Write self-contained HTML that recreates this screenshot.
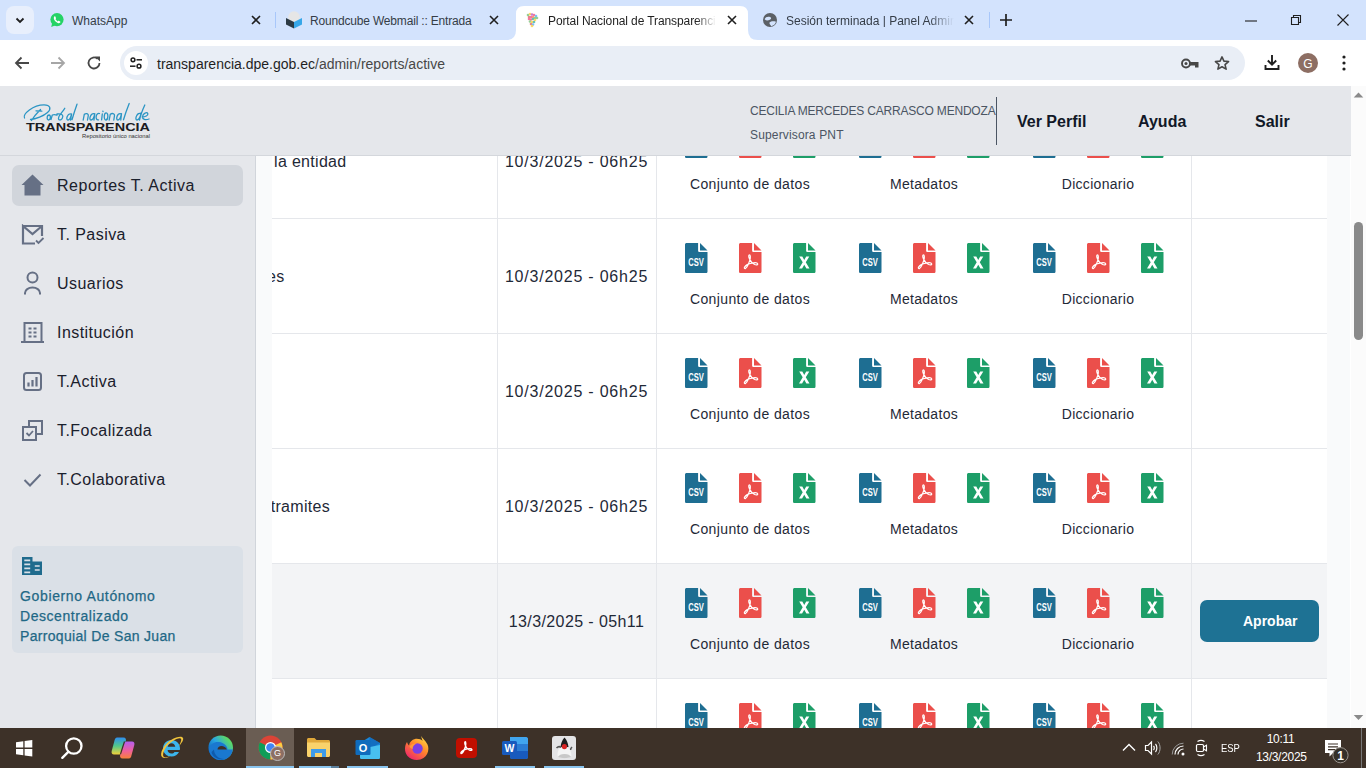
<!DOCTYPE html>
<html><head><meta charset="utf-8">
<style>
*{box-sizing:border-box;margin:0;padding:0}
html,body{width:1366px;height:768px;overflow:hidden;background:#fff;font-family:"Liberation Sans",sans-serif;position:relative}
.a{position:absolute}
.t{position:absolute;white-space:nowrap}
</style></head><body>
<div class="a" style="left:0px;top:0px;width:1366px;height:40px;background:#d3e3fd;"></div>
<div class="a" style="left:6px;top:6px;width:28px;height:28px;background:#e8effc;border-radius:8px"></div>
<svg class="a" style="left:13px;top:13px;" width="14" height="14" viewBox="0 0 14 14"><path d="M3.5 5.5 L7 9 L10.5 5.5" fill="none" stroke="#1f1f1f" stroke-width="1.8"/></svg>
<svg class="a" style="left:49px;top:12px;" width="16" height="16" viewBox="0 0 16 16"><circle cx="8" cy="7.6" r="6.6" fill="#25d366"/><path d="M2.2 15 L3.2 11 L6 13.5 Z" fill="#25d366"/><path d="M5.3 4.6c.4-.4.9-.4 1.1.1l.6 1.3c.1.3 0 .5-.2.7l-.4.4c.5 1 1.3 1.8 2.3 2.3l.4-.4c.2-.2.5-.3.7-.2l1.3.6c.4.2.5.7.1 1.1-.6.7-1.5.9-2.4.5-1.7-.8-3-2.1-3.8-3.8-.4-.9-.3-1.8.3-2.6z" fill="#fff"/></svg>
<div class="t" style="left:72px;top:14.84px;font-size:12px;line-height:12px;color:#353d47;font-weight:400;letter-spacing:0px;">WhatsApp</div>
<svg class="a" style="left:249px;top:13px;" width="14" height="14" viewBox="0 0 14 14"><path d="M3 3 L11 11 M11 3 L3 11" stroke="#1f1f1f" stroke-width="1.6"/></svg>
<div class="a" style="left:275px;top:12px;width:1px;height:16px;background:#a8c7fa;"></div>
<svg class="a" style="left:285px;top:9px;" width="18" height="21" viewBox="0 0 18 21"><circle cx="9" cy="8" r="5.8" fill="#e6e6e6"/><path d="M1 9 L9 13 V19.5 L1 15.5 Z" fill="#2c3a44"/><path d="M17 9 L9 13 V19.5 L17 15.5 Z" fill="#37a7e8"/></svg>
<div class="t" style="left:310px;top:14.84px;font-size:12px;line-height:12px;color:#353d47;font-weight:400;letter-spacing:-0.18px;">Roundcube Webmail :: Entrada</div>
<svg class="a" style="left:487px;top:13px;" width="14" height="14" viewBox="0 0 14 14"><path d="M3 3 L11 11 M11 3 L3 11" stroke="#1f1f1f" stroke-width="1.6"/></svg>
<svg class="a" style="left:506px;top:6px" width="252" height="34" viewBox="0 0 252 34"><path d="M0 34 Q10 34 10 24 L10 8 Q10 0 18 0 L234 0 Q242 0 242 8 L242 24 Q242 34 252 34 Z" fill="#fff"/></svg>
<svg class="a" style="left:526px;top:12px;" width="13" height="16" viewBox="0 0 13 16"><circle cx="2" cy="3" r="1.3" fill="#81c784" opacity=".85"/><circle cx="4" cy="2" r="1.3" fill="#ffd54f" opacity=".85"/><circle cx="6" cy="2.5" r="1.3" fill="#ba68c8" opacity=".85"/><circle cx="8" cy="3" r="1.3" fill="#f06292" opacity=".85"/><circle cx="10" cy="4" r="1.3" fill="#64b5f6" opacity=".85"/><circle cx="3" cy="5" r="1.3" fill="#e57373" opacity=".85"/><circle cx="5" cy="5" r="1.3" fill="#f06292" opacity=".85"/><circle cx="7" cy="5" r="1.3" fill="#ff8a65" opacity=".85"/><circle cx="9" cy="6" r="1.3" fill="#81c784" opacity=".85"/><circle cx="11" cy="6" r="1.3" fill="#81c784" opacity=".85"/><circle cx="3" cy="7" r="1.3" fill="#f06292" opacity=".85"/><circle cx="5" cy="7.5" r="1.3" fill="#f06292" opacity=".85"/><circle cx="7" cy="7" r="1.3" fill="#4db6ac" opacity=".85"/><circle cx="9" cy="8" r="1.3" fill="#ffd54f" opacity=".85"/><circle cx="4" cy="9.5" r="1.3" fill="#81c784" opacity=".85"/><circle cx="6" cy="10" r="1.3" fill="#ffd54f" opacity=".85"/><circle cx="8" cy="10" r="1.3" fill="#4db6ac" opacity=".85"/><circle cx="5" cy="12" r="1.3" fill="#e57373" opacity=".85"/><circle cx="7" cy="12.5" r="1.3" fill="#64b5f6" opacity=".85"/><circle cx="6" cy="14" r="1.3" fill="#ffd54f" opacity=".85"/></svg>
<div class="t" style="left:548px;top:14.84px;font-size:12px;line-height:12px;color:#1f1f1f;font-weight:400;letter-spacing:-0.1px;width:168px;overflow:hidden;-webkit-mask-image:linear-gradient(90deg,#000 88%,transparent)">Portal Nacional de Transparenci</div>
<svg class="a" style="left:725px;top:13px;" width="14" height="14" viewBox="0 0 14 14"><path d="M3 3 L11 11 M11 3 L3 11" stroke="#1f1f1f" stroke-width="1.6"/></svg>
<svg class="a" style="left:763px;top:13px;" width="14" height="14" viewBox="0 0 14 14"><circle cx="7" cy="7" r="7" fill="#5b6066"/><path d="M1.6 6.2 C2.5 3.8 5 3.2 7.5 4.2 C8.6 4.7 8.2 6.2 6.8 6.8 C5 7.6 3.2 7.8 1.6 6.2Z" fill="#d3e3fd"/><path d="M6.5 9.5 C8 8.2 10.5 8 13 8.8 C12.5 11 10.5 12.8 8.2 13.2 C7.8 12 6 11 6.5 9.5Z" fill="#d3e3fd"/></svg>
<div class="t" style="left:786px;top:14.84px;font-size:12px;line-height:12px;color:#353d47;font-weight:400;letter-spacing:0px;width:168px;overflow:hidden;-webkit-mask-image:linear-gradient(90deg,#000 85%,transparent)">Sesión terminada | Panel Admin</div>
<svg class="a" style="left:962px;top:13px;" width="14" height="14" viewBox="0 0 14 14"><path d="M3 3 L11 11 M11 3 L3 11" stroke="#1f1f1f" stroke-width="1.6"/></svg>
<div class="a" style="left:989px;top:12px;width:1px;height:16px;background:#a8c7fa;"></div>
<svg class="a" style="left:998px;top:12px;" width="16" height="16" viewBox="0 0 16 16"><path d="M8 2 V14 M2 8 H14" stroke="#1f1f1f" stroke-width="1.7"/></svg>
<svg class="a" style="left:1243px;top:13px;" width="16" height="16" viewBox="0 0 16 16"><path d="M2 8 H14" stroke="#1f1f1f" stroke-width="1.1"/></svg>
<svg class="a" style="left:1288px;top:12px;" width="16" height="16" viewBox="0 0 16 16"><path d="M3.5 5.5 H10.5 V12.5 H3.5 Z M5.5 5.5 V3.5 H12.5 V10.5 H10.5" fill="none" stroke="#1f1f1f" stroke-width="1.1"/></svg>
<svg class="a" style="left:1335px;top:12px;" width="16" height="16" viewBox="0 0 16 16"><path d="M2.5 2.5 L13.5 13.5 M13.5 2.5 L2.5 13.5" stroke="#1f1f1f" stroke-width="1.1"/></svg>
<div class="a" style="left:0px;top:40px;width:1366px;height:46px;background:#fff;border-radius:8px 8px 0 0"></div>
<svg class="a" style="left:13px;top:54px;" width="18" height="18" viewBox="0 0 18 18"><path d="M16 9 H3 M8.5 3.5 L3 9 L8.5 14.5" fill="none" stroke="#474747" stroke-width="1.8"/></svg>
<svg class="a" style="left:49px;top:54px;" width="18" height="18" viewBox="0 0 18 18"><path d="M2 9 H15 M9.5 3.5 L15 9 L9.5 14.5" fill="none" stroke="#a6a6a6" stroke-width="1.8"/></svg>
<svg class="a" style="left:85px;top:54px;" width="18" height="18" viewBox="0 0 18 18"><path d="M14.5 9 A5.5 5.5 0 1 1 12.6 4.8" fill="none" stroke="#474747" stroke-width="1.8"/><path d="M10 2.5 H15 V7.5 Z" fill="#474747"/></svg>
<div class="a" style="left:120px;top:46px;width:1125px;height:34px;background:#e9eef6;border-radius:17px"></div>
<div class="a" style="left:124px;top:51px;width:24px;height:24px;background:#fff;border-radius:12px"></div>
<svg class="a" style="left:128px;top:55px;" width="16" height="16" viewBox="0 0 16 16"><circle cx="5" cy="4.8" r="1.9" fill="none" stroke="#1f1f1f" stroke-width="1.5"/><path d="M8.5 4.8 H14" stroke="#1f1f1f" stroke-width="1.5"/><circle cx="11" cy="11.2" r="1.9" fill="none" stroke="#1f1f1f" stroke-width="1.5"/><path d="M2 11.2 H7.5" stroke="#1f1f1f" stroke-width="1.5"/></svg>
<div class="t" style="left:157px;top:57.05px;font-size:14px;line-height:14px;color:#1f1f1f;font-weight:400;letter-spacing:0px;">transparencia.dpe.gob.ec<span style="color:#474747">/admin/reports/active</span></div>
<svg class="a" style="left:1180px;top:55px;" width="20" height="16" viewBox="0 0 20 16"><circle cx="6" cy="8.5" r="4" fill="none" stroke="#474747" stroke-width="1.9"/><circle cx="6" cy="8.5" r="1.5" fill="#474747"/><path d="M9.5 7 H18.5 V12.5 H15 V10.5 H9.5 Z" fill="#474747"/></svg>
<svg class="a" style="left:1212px;top:53px;" width="20" height="20" viewBox="0 0 20 20"><path transform="translate(10 10) scale(0.84) translate(-10 -9.5)" d="M10 2.2 L12.3 7.3 L17.8 7.8 L13.6 11.4 L14.9 16.8 L10 13.9 L5.1 16.8 L6.4 11.4 L2.2 7.8 L7.7 7.3 Z" fill="none" stroke="#474747" stroke-width="1.9" stroke-linejoin="round"/></svg>
<svg class="a" style="left:1262px;top:52px;" width="20" height="20" viewBox="0 0 20 20"><path d="M10 3 V12.5 M5.8 8.5 L10 12.7 L14.2 8.5" fill="none" stroke="#1f1f1f" stroke-width="1.9"/><path d="M3.5 13 V17 H16.5 V13" fill="none" stroke="#1f1f1f" stroke-width="1.9"/></svg>
<div class="a" style="left:1298px;top:53px;width:20px;height:20px;background:#8d6e63;border-radius:10px"></div>
<div class="t" style="left:1298.0px;width:20px;text-align:center;top:57.84px;font-size:12px;line-height:12px;color:#fff;font-weight:400;letter-spacing:0px;">G</div>
<svg class="a" style="left:1337px;top:53px;" width="14" height="20" viewBox="0 0 14 20"><circle cx="7" cy="4" r="1.6" fill="#1f1f1f"/><circle cx="7" cy="10" r="1.6" fill="#1f1f1f"/><circle cx="7" cy="16" r="1.6" fill="#1f1f1f"/></svg>
<div class="a" style="left:0px;top:86px;width:1350px;height:642px;background:#fff;"></div>
<div class="a" style="left:256px;top:155px;width:16px;height:573px;background:#f9fafb;"></div>
<div class="a" style="left:1327px;top:155px;width:23px;height:573px;background:#f9fafb;"></div>
<div class="a" style="left:272px;top:103px;width:1055px;height:115px;background:#fff;"></div>
<div class="a" style="left:272px;top:103px;width:225px;height:115px;overflow:hidden"><div class="t" style="left:0px;top:51.06px;font-size:16px;line-height:16px;color:#1f2937;font-weight:400;letter-spacing:0.3px;left:auto;right:150.5px">la entidad</div>
</div><div class="t" style="left:476.5px;width:200px;text-align:center;top:154.06px;font-size:16px;line-height:16px;color:#1f2937;font-weight:400;letter-spacing:0.78px;">10/3/2025 - 06h25</div>
<svg class="a" style="left:685px;top:128px" width="22.5" height="30" viewBox="0 0 22.5 30"><path d="M0 1.6C0 .7 .7 0 1.6 0H13.1V7.5c0 .9.7 1.6 1.6 1.6H22.5V28.4c0 .9-.7 1.6-1.6 1.6H1.6c-.9 0-1.6-.7-1.6-1.6Z" fill="#1e6e92"/><path d="M22.5 7.5H15V0Z" fill="#1e6e92"/><text x="3.3" y="22.6" font-family="Liberation Sans" font-weight="700" font-size="10.4" fill="#fff" textLength="15.6" lengthAdjust="spacingAndGlyphs">CSV</text></svg>
<svg class="a" style="left:739px;top:128px" width="22.5" height="30" viewBox="0 0 22.5 30"><path d="M0 1.6C0 .7 .7 0 1.6 0H13.1V7.5c0 .9.7 1.6 1.6 1.6H22.5V28.4c0 .9-.7 1.6-1.6 1.6H1.6c-.9 0-1.6-.7-1.6-1.6Z" fill="#eb4f4b"/><path d="M22.5 7.5H15V0Z" fill="#eb4f4b"/><path transform="translate(11.25 19) scale(1.18) translate(-11.6 -18.3)" d="M11 12.2c-.9 0-.9 1.6 0 3.6 .8 1.8 2.3 3.7 4.3 4.6 1.5.6 2.8.3 2.6-.6-.2-.9-2.3-1.1-4.9-.6-2.7.5-5.3 1.9-6.2 3.4-.6 1 .1 1.6 1 .9 1.2-1 2.5-3.9 3.4-6.6.6-1.9.7-4.7-.2-4.7z" fill="none" stroke="#fff" stroke-width="1.05"/></svg>
<svg class="a" style="left:793px;top:128px" width="22.5" height="30" viewBox="0 0 22.5 30"><path d="M0 1.6C0 .7 .7 0 1.6 0H13.1V7.5c0 .9.7 1.6 1.6 1.6H22.5V28.4c0 .9-.7 1.6-1.6 1.6H1.6c-.9 0-1.6-.7-1.6-1.6Z" fill="#1d9e68"/><path d="M22.5 7.5H15V0Z" fill="#1d9e68"/><path d="M6.2 13.5H9.3L11.25 16.9L13.2 13.5H16.3L12.8 19.3L16.5 25.5H13.4L11.25 21.7L9.1 25.5H6L9.7 19.3Z" fill="#fff"/></svg>
<svg class="a" style="left:859px;top:128px" width="22.5" height="30" viewBox="0 0 22.5 30"><path d="M0 1.6C0 .7 .7 0 1.6 0H13.1V7.5c0 .9.7 1.6 1.6 1.6H22.5V28.4c0 .9-.7 1.6-1.6 1.6H1.6c-.9 0-1.6-.7-1.6-1.6Z" fill="#1e6e92"/><path d="M22.5 7.5H15V0Z" fill="#1e6e92"/><text x="3.3" y="22.6" font-family="Liberation Sans" font-weight="700" font-size="10.4" fill="#fff" textLength="15.6" lengthAdjust="spacingAndGlyphs">CSV</text></svg>
<svg class="a" style="left:913px;top:128px" width="22.5" height="30" viewBox="0 0 22.5 30"><path d="M0 1.6C0 .7 .7 0 1.6 0H13.1V7.5c0 .9.7 1.6 1.6 1.6H22.5V28.4c0 .9-.7 1.6-1.6 1.6H1.6c-.9 0-1.6-.7-1.6-1.6Z" fill="#eb4f4b"/><path d="M22.5 7.5H15V0Z" fill="#eb4f4b"/><path transform="translate(11.25 19) scale(1.18) translate(-11.6 -18.3)" d="M11 12.2c-.9 0-.9 1.6 0 3.6 .8 1.8 2.3 3.7 4.3 4.6 1.5.6 2.8.3 2.6-.6-.2-.9-2.3-1.1-4.9-.6-2.7.5-5.3 1.9-6.2 3.4-.6 1 .1 1.6 1 .9 1.2-1 2.5-3.9 3.4-6.6.6-1.9.7-4.7-.2-4.7z" fill="none" stroke="#fff" stroke-width="1.05"/></svg>
<svg class="a" style="left:967px;top:128px" width="22.5" height="30" viewBox="0 0 22.5 30"><path d="M0 1.6C0 .7 .7 0 1.6 0H13.1V7.5c0 .9.7 1.6 1.6 1.6H22.5V28.4c0 .9-.7 1.6-1.6 1.6H1.6c-.9 0-1.6-.7-1.6-1.6Z" fill="#1d9e68"/><path d="M22.5 7.5H15V0Z" fill="#1d9e68"/><path d="M6.2 13.5H9.3L11.25 16.9L13.2 13.5H16.3L12.8 19.3L16.5 25.5H13.4L11.25 21.7L9.1 25.5H6L9.7 19.3Z" fill="#fff"/></svg>
<svg class="a" style="left:1033px;top:128px" width="22.5" height="30" viewBox="0 0 22.5 30"><path d="M0 1.6C0 .7 .7 0 1.6 0H13.1V7.5c0 .9.7 1.6 1.6 1.6H22.5V28.4c0 .9-.7 1.6-1.6 1.6H1.6c-.9 0-1.6-.7-1.6-1.6Z" fill="#1e6e92"/><path d="M22.5 7.5H15V0Z" fill="#1e6e92"/><text x="3.3" y="22.6" font-family="Liberation Sans" font-weight="700" font-size="10.4" fill="#fff" textLength="15.6" lengthAdjust="spacingAndGlyphs">CSV</text></svg>
<svg class="a" style="left:1087px;top:128px" width="22.5" height="30" viewBox="0 0 22.5 30"><path d="M0 1.6C0 .7 .7 0 1.6 0H13.1V7.5c0 .9.7 1.6 1.6 1.6H22.5V28.4c0 .9-.7 1.6-1.6 1.6H1.6c-.9 0-1.6-.7-1.6-1.6Z" fill="#eb4f4b"/><path d="M22.5 7.5H15V0Z" fill="#eb4f4b"/><path transform="translate(11.25 19) scale(1.18) translate(-11.6 -18.3)" d="M11 12.2c-.9 0-.9 1.6 0 3.6 .8 1.8 2.3 3.7 4.3 4.6 1.5.6 2.8.3 2.6-.6-.2-.9-2.3-1.1-4.9-.6-2.7.5-5.3 1.9-6.2 3.4-.6 1 .1 1.6 1 .9 1.2-1 2.5-3.9 3.4-6.6.6-1.9.7-4.7-.2-4.7z" fill="none" stroke="#fff" stroke-width="1.05"/></svg>
<svg class="a" style="left:1141px;top:128px" width="22.5" height="30" viewBox="0 0 22.5 30"><path d="M0 1.6C0 .7 .7 0 1.6 0H13.1V7.5c0 .9.7 1.6 1.6 1.6H22.5V28.4c0 .9-.7 1.6-1.6 1.6H1.6c-.9 0-1.6-.7-1.6-1.6Z" fill="#1d9e68"/><path d="M22.5 7.5H15V0Z" fill="#1d9e68"/><path d="M6.2 13.5H9.3L11.25 16.9L13.2 13.5H16.3L12.8 19.3L16.5 25.5H13.4L11.25 21.7L9.1 25.5H6L9.7 19.3Z" fill="#fff"/></svg>
<div class="t" style="left:650.0px;width:200px;text-align:center;top:177.05px;font-size:14px;line-height:14px;color:#1f2937;font-weight:400;letter-spacing:0.38px;">Conjunto de datos</div>
<div class="t" style="left:824.0px;width:200px;text-align:center;top:177.05px;font-size:14px;line-height:14px;color:#1f2937;font-weight:400;letter-spacing:0.3px;">Metadatos</div>
<div class="t" style="left:998.0px;width:200px;text-align:center;top:177.05px;font-size:14px;line-height:14px;color:#1f2937;font-weight:400;letter-spacing:0.3px;">Diccionario</div>
<div class="a" style="left:272px;top:218px;width:1055px;height:115px;background:#fff;"></div>
<div class="a" style="left:272px;top:218px;width:225px;height:115px;overflow:hidden"><div class="t" style="left:0px;top:51.06px;font-size:16px;line-height:16px;color:#1f2937;font-weight:400;letter-spacing:0.3px;left:auto;right:212.5px">ones</div>
</div><div class="t" style="left:476.5px;width:200px;text-align:center;top:269.06px;font-size:16px;line-height:16px;color:#1f2937;font-weight:400;letter-spacing:0.78px;">10/3/2025 - 06h25</div>
<svg class="a" style="left:685px;top:243px" width="22.5" height="30" viewBox="0 0 22.5 30"><path d="M0 1.6C0 .7 .7 0 1.6 0H13.1V7.5c0 .9.7 1.6 1.6 1.6H22.5V28.4c0 .9-.7 1.6-1.6 1.6H1.6c-.9 0-1.6-.7-1.6-1.6Z" fill="#1e6e92"/><path d="M22.5 7.5H15V0Z" fill="#1e6e92"/><text x="3.3" y="22.6" font-family="Liberation Sans" font-weight="700" font-size="10.4" fill="#fff" textLength="15.6" lengthAdjust="spacingAndGlyphs">CSV</text></svg>
<svg class="a" style="left:739px;top:243px" width="22.5" height="30" viewBox="0 0 22.5 30"><path d="M0 1.6C0 .7 .7 0 1.6 0H13.1V7.5c0 .9.7 1.6 1.6 1.6H22.5V28.4c0 .9-.7 1.6-1.6 1.6H1.6c-.9 0-1.6-.7-1.6-1.6Z" fill="#eb4f4b"/><path d="M22.5 7.5H15V0Z" fill="#eb4f4b"/><path transform="translate(11.25 19) scale(1.18) translate(-11.6 -18.3)" d="M11 12.2c-.9 0-.9 1.6 0 3.6 .8 1.8 2.3 3.7 4.3 4.6 1.5.6 2.8.3 2.6-.6-.2-.9-2.3-1.1-4.9-.6-2.7.5-5.3 1.9-6.2 3.4-.6 1 .1 1.6 1 .9 1.2-1 2.5-3.9 3.4-6.6.6-1.9.7-4.7-.2-4.7z" fill="none" stroke="#fff" stroke-width="1.05"/></svg>
<svg class="a" style="left:793px;top:243px" width="22.5" height="30" viewBox="0 0 22.5 30"><path d="M0 1.6C0 .7 .7 0 1.6 0H13.1V7.5c0 .9.7 1.6 1.6 1.6H22.5V28.4c0 .9-.7 1.6-1.6 1.6H1.6c-.9 0-1.6-.7-1.6-1.6Z" fill="#1d9e68"/><path d="M22.5 7.5H15V0Z" fill="#1d9e68"/><path d="M6.2 13.5H9.3L11.25 16.9L13.2 13.5H16.3L12.8 19.3L16.5 25.5H13.4L11.25 21.7L9.1 25.5H6L9.7 19.3Z" fill="#fff"/></svg>
<svg class="a" style="left:859px;top:243px" width="22.5" height="30" viewBox="0 0 22.5 30"><path d="M0 1.6C0 .7 .7 0 1.6 0H13.1V7.5c0 .9.7 1.6 1.6 1.6H22.5V28.4c0 .9-.7 1.6-1.6 1.6H1.6c-.9 0-1.6-.7-1.6-1.6Z" fill="#1e6e92"/><path d="M22.5 7.5H15V0Z" fill="#1e6e92"/><text x="3.3" y="22.6" font-family="Liberation Sans" font-weight="700" font-size="10.4" fill="#fff" textLength="15.6" lengthAdjust="spacingAndGlyphs">CSV</text></svg>
<svg class="a" style="left:913px;top:243px" width="22.5" height="30" viewBox="0 0 22.5 30"><path d="M0 1.6C0 .7 .7 0 1.6 0H13.1V7.5c0 .9.7 1.6 1.6 1.6H22.5V28.4c0 .9-.7 1.6-1.6 1.6H1.6c-.9 0-1.6-.7-1.6-1.6Z" fill="#eb4f4b"/><path d="M22.5 7.5H15V0Z" fill="#eb4f4b"/><path transform="translate(11.25 19) scale(1.18) translate(-11.6 -18.3)" d="M11 12.2c-.9 0-.9 1.6 0 3.6 .8 1.8 2.3 3.7 4.3 4.6 1.5.6 2.8.3 2.6-.6-.2-.9-2.3-1.1-4.9-.6-2.7.5-5.3 1.9-6.2 3.4-.6 1 .1 1.6 1 .9 1.2-1 2.5-3.9 3.4-6.6.6-1.9.7-4.7-.2-4.7z" fill="none" stroke="#fff" stroke-width="1.05"/></svg>
<svg class="a" style="left:967px;top:243px" width="22.5" height="30" viewBox="0 0 22.5 30"><path d="M0 1.6C0 .7 .7 0 1.6 0H13.1V7.5c0 .9.7 1.6 1.6 1.6H22.5V28.4c0 .9-.7 1.6-1.6 1.6H1.6c-.9 0-1.6-.7-1.6-1.6Z" fill="#1d9e68"/><path d="M22.5 7.5H15V0Z" fill="#1d9e68"/><path d="M6.2 13.5H9.3L11.25 16.9L13.2 13.5H16.3L12.8 19.3L16.5 25.5H13.4L11.25 21.7L9.1 25.5H6L9.7 19.3Z" fill="#fff"/></svg>
<svg class="a" style="left:1033px;top:243px" width="22.5" height="30" viewBox="0 0 22.5 30"><path d="M0 1.6C0 .7 .7 0 1.6 0H13.1V7.5c0 .9.7 1.6 1.6 1.6H22.5V28.4c0 .9-.7 1.6-1.6 1.6H1.6c-.9 0-1.6-.7-1.6-1.6Z" fill="#1e6e92"/><path d="M22.5 7.5H15V0Z" fill="#1e6e92"/><text x="3.3" y="22.6" font-family="Liberation Sans" font-weight="700" font-size="10.4" fill="#fff" textLength="15.6" lengthAdjust="spacingAndGlyphs">CSV</text></svg>
<svg class="a" style="left:1087px;top:243px" width="22.5" height="30" viewBox="0 0 22.5 30"><path d="M0 1.6C0 .7 .7 0 1.6 0H13.1V7.5c0 .9.7 1.6 1.6 1.6H22.5V28.4c0 .9-.7 1.6-1.6 1.6H1.6c-.9 0-1.6-.7-1.6-1.6Z" fill="#eb4f4b"/><path d="M22.5 7.5H15V0Z" fill="#eb4f4b"/><path transform="translate(11.25 19) scale(1.18) translate(-11.6 -18.3)" d="M11 12.2c-.9 0-.9 1.6 0 3.6 .8 1.8 2.3 3.7 4.3 4.6 1.5.6 2.8.3 2.6-.6-.2-.9-2.3-1.1-4.9-.6-2.7.5-5.3 1.9-6.2 3.4-.6 1 .1 1.6 1 .9 1.2-1 2.5-3.9 3.4-6.6.6-1.9.7-4.7-.2-4.7z" fill="none" stroke="#fff" stroke-width="1.05"/></svg>
<svg class="a" style="left:1141px;top:243px" width="22.5" height="30" viewBox="0 0 22.5 30"><path d="M0 1.6C0 .7 .7 0 1.6 0H13.1V7.5c0 .9.7 1.6 1.6 1.6H22.5V28.4c0 .9-.7 1.6-1.6 1.6H1.6c-.9 0-1.6-.7-1.6-1.6Z" fill="#1d9e68"/><path d="M22.5 7.5H15V0Z" fill="#1d9e68"/><path d="M6.2 13.5H9.3L11.25 16.9L13.2 13.5H16.3L12.8 19.3L16.5 25.5H13.4L11.25 21.7L9.1 25.5H6L9.7 19.3Z" fill="#fff"/></svg>
<div class="t" style="left:650.0px;width:200px;text-align:center;top:292.05px;font-size:14px;line-height:14px;color:#1f2937;font-weight:400;letter-spacing:0.38px;">Conjunto de datos</div>
<div class="t" style="left:824.0px;width:200px;text-align:center;top:292.05px;font-size:14px;line-height:14px;color:#1f2937;font-weight:400;letter-spacing:0.3px;">Metadatos</div>
<div class="t" style="left:998.0px;width:200px;text-align:center;top:292.05px;font-size:14px;line-height:14px;color:#1f2937;font-weight:400;letter-spacing:0.3px;">Diccionario</div>
<div class="a" style="left:272px;top:333px;width:1055px;height:115px;background:#fff;"></div>
<div class="t" style="left:476.5px;width:200px;text-align:center;top:384.06px;font-size:16px;line-height:16px;color:#1f2937;font-weight:400;letter-spacing:0.78px;">10/3/2025 - 06h25</div>
<svg class="a" style="left:685px;top:358px" width="22.5" height="30" viewBox="0 0 22.5 30"><path d="M0 1.6C0 .7 .7 0 1.6 0H13.1V7.5c0 .9.7 1.6 1.6 1.6H22.5V28.4c0 .9-.7 1.6-1.6 1.6H1.6c-.9 0-1.6-.7-1.6-1.6Z" fill="#1e6e92"/><path d="M22.5 7.5H15V0Z" fill="#1e6e92"/><text x="3.3" y="22.6" font-family="Liberation Sans" font-weight="700" font-size="10.4" fill="#fff" textLength="15.6" lengthAdjust="spacingAndGlyphs">CSV</text></svg>
<svg class="a" style="left:739px;top:358px" width="22.5" height="30" viewBox="0 0 22.5 30"><path d="M0 1.6C0 .7 .7 0 1.6 0H13.1V7.5c0 .9.7 1.6 1.6 1.6H22.5V28.4c0 .9-.7 1.6-1.6 1.6H1.6c-.9 0-1.6-.7-1.6-1.6Z" fill="#eb4f4b"/><path d="M22.5 7.5H15V0Z" fill="#eb4f4b"/><path transform="translate(11.25 19) scale(1.18) translate(-11.6 -18.3)" d="M11 12.2c-.9 0-.9 1.6 0 3.6 .8 1.8 2.3 3.7 4.3 4.6 1.5.6 2.8.3 2.6-.6-.2-.9-2.3-1.1-4.9-.6-2.7.5-5.3 1.9-6.2 3.4-.6 1 .1 1.6 1 .9 1.2-1 2.5-3.9 3.4-6.6.6-1.9.7-4.7-.2-4.7z" fill="none" stroke="#fff" stroke-width="1.05"/></svg>
<svg class="a" style="left:793px;top:358px" width="22.5" height="30" viewBox="0 0 22.5 30"><path d="M0 1.6C0 .7 .7 0 1.6 0H13.1V7.5c0 .9.7 1.6 1.6 1.6H22.5V28.4c0 .9-.7 1.6-1.6 1.6H1.6c-.9 0-1.6-.7-1.6-1.6Z" fill="#1d9e68"/><path d="M22.5 7.5H15V0Z" fill="#1d9e68"/><path d="M6.2 13.5H9.3L11.25 16.9L13.2 13.5H16.3L12.8 19.3L16.5 25.5H13.4L11.25 21.7L9.1 25.5H6L9.7 19.3Z" fill="#fff"/></svg>
<svg class="a" style="left:859px;top:358px" width="22.5" height="30" viewBox="0 0 22.5 30"><path d="M0 1.6C0 .7 .7 0 1.6 0H13.1V7.5c0 .9.7 1.6 1.6 1.6H22.5V28.4c0 .9-.7 1.6-1.6 1.6H1.6c-.9 0-1.6-.7-1.6-1.6Z" fill="#1e6e92"/><path d="M22.5 7.5H15V0Z" fill="#1e6e92"/><text x="3.3" y="22.6" font-family="Liberation Sans" font-weight="700" font-size="10.4" fill="#fff" textLength="15.6" lengthAdjust="spacingAndGlyphs">CSV</text></svg>
<svg class="a" style="left:913px;top:358px" width="22.5" height="30" viewBox="0 0 22.5 30"><path d="M0 1.6C0 .7 .7 0 1.6 0H13.1V7.5c0 .9.7 1.6 1.6 1.6H22.5V28.4c0 .9-.7 1.6-1.6 1.6H1.6c-.9 0-1.6-.7-1.6-1.6Z" fill="#eb4f4b"/><path d="M22.5 7.5H15V0Z" fill="#eb4f4b"/><path transform="translate(11.25 19) scale(1.18) translate(-11.6 -18.3)" d="M11 12.2c-.9 0-.9 1.6 0 3.6 .8 1.8 2.3 3.7 4.3 4.6 1.5.6 2.8.3 2.6-.6-.2-.9-2.3-1.1-4.9-.6-2.7.5-5.3 1.9-6.2 3.4-.6 1 .1 1.6 1 .9 1.2-1 2.5-3.9 3.4-6.6.6-1.9.7-4.7-.2-4.7z" fill="none" stroke="#fff" stroke-width="1.05"/></svg>
<svg class="a" style="left:967px;top:358px" width="22.5" height="30" viewBox="0 0 22.5 30"><path d="M0 1.6C0 .7 .7 0 1.6 0H13.1V7.5c0 .9.7 1.6 1.6 1.6H22.5V28.4c0 .9-.7 1.6-1.6 1.6H1.6c-.9 0-1.6-.7-1.6-1.6Z" fill="#1d9e68"/><path d="M22.5 7.5H15V0Z" fill="#1d9e68"/><path d="M6.2 13.5H9.3L11.25 16.9L13.2 13.5H16.3L12.8 19.3L16.5 25.5H13.4L11.25 21.7L9.1 25.5H6L9.7 19.3Z" fill="#fff"/></svg>
<svg class="a" style="left:1033px;top:358px" width="22.5" height="30" viewBox="0 0 22.5 30"><path d="M0 1.6C0 .7 .7 0 1.6 0H13.1V7.5c0 .9.7 1.6 1.6 1.6H22.5V28.4c0 .9-.7 1.6-1.6 1.6H1.6c-.9 0-1.6-.7-1.6-1.6Z" fill="#1e6e92"/><path d="M22.5 7.5H15V0Z" fill="#1e6e92"/><text x="3.3" y="22.6" font-family="Liberation Sans" font-weight="700" font-size="10.4" fill="#fff" textLength="15.6" lengthAdjust="spacingAndGlyphs">CSV</text></svg>
<svg class="a" style="left:1087px;top:358px" width="22.5" height="30" viewBox="0 0 22.5 30"><path d="M0 1.6C0 .7 .7 0 1.6 0H13.1V7.5c0 .9.7 1.6 1.6 1.6H22.5V28.4c0 .9-.7 1.6-1.6 1.6H1.6c-.9 0-1.6-.7-1.6-1.6Z" fill="#eb4f4b"/><path d="M22.5 7.5H15V0Z" fill="#eb4f4b"/><path transform="translate(11.25 19) scale(1.18) translate(-11.6 -18.3)" d="M11 12.2c-.9 0-.9 1.6 0 3.6 .8 1.8 2.3 3.7 4.3 4.6 1.5.6 2.8.3 2.6-.6-.2-.9-2.3-1.1-4.9-.6-2.7.5-5.3 1.9-6.2 3.4-.6 1 .1 1.6 1 .9 1.2-1 2.5-3.9 3.4-6.6.6-1.9.7-4.7-.2-4.7z" fill="none" stroke="#fff" stroke-width="1.05"/></svg>
<svg class="a" style="left:1141px;top:358px" width="22.5" height="30" viewBox="0 0 22.5 30"><path d="M0 1.6C0 .7 .7 0 1.6 0H13.1V7.5c0 .9.7 1.6 1.6 1.6H22.5V28.4c0 .9-.7 1.6-1.6 1.6H1.6c-.9 0-1.6-.7-1.6-1.6Z" fill="#1d9e68"/><path d="M22.5 7.5H15V0Z" fill="#1d9e68"/><path d="M6.2 13.5H9.3L11.25 16.9L13.2 13.5H16.3L12.8 19.3L16.5 25.5H13.4L11.25 21.7L9.1 25.5H6L9.7 19.3Z" fill="#fff"/></svg>
<div class="t" style="left:650.0px;width:200px;text-align:center;top:407.05px;font-size:14px;line-height:14px;color:#1f2937;font-weight:400;letter-spacing:0.38px;">Conjunto de datos</div>
<div class="t" style="left:824.0px;width:200px;text-align:center;top:407.05px;font-size:14px;line-height:14px;color:#1f2937;font-weight:400;letter-spacing:0.3px;">Metadatos</div>
<div class="t" style="left:998.0px;width:200px;text-align:center;top:407.05px;font-size:14px;line-height:14px;color:#1f2937;font-weight:400;letter-spacing:0.3px;">Diccionario</div>
<div class="a" style="left:272px;top:448px;width:1055px;height:115px;background:#fff;"></div>
<div class="a" style="left:272px;top:448px;width:225px;height:115px;overflow:hidden"><div class="t" style="left:0px;top:51.06px;font-size:16px;line-height:16px;color:#1f2937;font-weight:400;letter-spacing:0.3px;left:auto;right:167px">de tramites</div>
</div><div class="t" style="left:476.5px;width:200px;text-align:center;top:499.06px;font-size:16px;line-height:16px;color:#1f2937;font-weight:400;letter-spacing:0.78px;">10/3/2025 - 06h25</div>
<svg class="a" style="left:685px;top:473px" width="22.5" height="30" viewBox="0 0 22.5 30"><path d="M0 1.6C0 .7 .7 0 1.6 0H13.1V7.5c0 .9.7 1.6 1.6 1.6H22.5V28.4c0 .9-.7 1.6-1.6 1.6H1.6c-.9 0-1.6-.7-1.6-1.6Z" fill="#1e6e92"/><path d="M22.5 7.5H15V0Z" fill="#1e6e92"/><text x="3.3" y="22.6" font-family="Liberation Sans" font-weight="700" font-size="10.4" fill="#fff" textLength="15.6" lengthAdjust="spacingAndGlyphs">CSV</text></svg>
<svg class="a" style="left:739px;top:473px" width="22.5" height="30" viewBox="0 0 22.5 30"><path d="M0 1.6C0 .7 .7 0 1.6 0H13.1V7.5c0 .9.7 1.6 1.6 1.6H22.5V28.4c0 .9-.7 1.6-1.6 1.6H1.6c-.9 0-1.6-.7-1.6-1.6Z" fill="#eb4f4b"/><path d="M22.5 7.5H15V0Z" fill="#eb4f4b"/><path transform="translate(11.25 19) scale(1.18) translate(-11.6 -18.3)" d="M11 12.2c-.9 0-.9 1.6 0 3.6 .8 1.8 2.3 3.7 4.3 4.6 1.5.6 2.8.3 2.6-.6-.2-.9-2.3-1.1-4.9-.6-2.7.5-5.3 1.9-6.2 3.4-.6 1 .1 1.6 1 .9 1.2-1 2.5-3.9 3.4-6.6.6-1.9.7-4.7-.2-4.7z" fill="none" stroke="#fff" stroke-width="1.05"/></svg>
<svg class="a" style="left:793px;top:473px" width="22.5" height="30" viewBox="0 0 22.5 30"><path d="M0 1.6C0 .7 .7 0 1.6 0H13.1V7.5c0 .9.7 1.6 1.6 1.6H22.5V28.4c0 .9-.7 1.6-1.6 1.6H1.6c-.9 0-1.6-.7-1.6-1.6Z" fill="#1d9e68"/><path d="M22.5 7.5H15V0Z" fill="#1d9e68"/><path d="M6.2 13.5H9.3L11.25 16.9L13.2 13.5H16.3L12.8 19.3L16.5 25.5H13.4L11.25 21.7L9.1 25.5H6L9.7 19.3Z" fill="#fff"/></svg>
<svg class="a" style="left:859px;top:473px" width="22.5" height="30" viewBox="0 0 22.5 30"><path d="M0 1.6C0 .7 .7 0 1.6 0H13.1V7.5c0 .9.7 1.6 1.6 1.6H22.5V28.4c0 .9-.7 1.6-1.6 1.6H1.6c-.9 0-1.6-.7-1.6-1.6Z" fill="#1e6e92"/><path d="M22.5 7.5H15V0Z" fill="#1e6e92"/><text x="3.3" y="22.6" font-family="Liberation Sans" font-weight="700" font-size="10.4" fill="#fff" textLength="15.6" lengthAdjust="spacingAndGlyphs">CSV</text></svg>
<svg class="a" style="left:913px;top:473px" width="22.5" height="30" viewBox="0 0 22.5 30"><path d="M0 1.6C0 .7 .7 0 1.6 0H13.1V7.5c0 .9.7 1.6 1.6 1.6H22.5V28.4c0 .9-.7 1.6-1.6 1.6H1.6c-.9 0-1.6-.7-1.6-1.6Z" fill="#eb4f4b"/><path d="M22.5 7.5H15V0Z" fill="#eb4f4b"/><path transform="translate(11.25 19) scale(1.18) translate(-11.6 -18.3)" d="M11 12.2c-.9 0-.9 1.6 0 3.6 .8 1.8 2.3 3.7 4.3 4.6 1.5.6 2.8.3 2.6-.6-.2-.9-2.3-1.1-4.9-.6-2.7.5-5.3 1.9-6.2 3.4-.6 1 .1 1.6 1 .9 1.2-1 2.5-3.9 3.4-6.6.6-1.9.7-4.7-.2-4.7z" fill="none" stroke="#fff" stroke-width="1.05"/></svg>
<svg class="a" style="left:967px;top:473px" width="22.5" height="30" viewBox="0 0 22.5 30"><path d="M0 1.6C0 .7 .7 0 1.6 0H13.1V7.5c0 .9.7 1.6 1.6 1.6H22.5V28.4c0 .9-.7 1.6-1.6 1.6H1.6c-.9 0-1.6-.7-1.6-1.6Z" fill="#1d9e68"/><path d="M22.5 7.5H15V0Z" fill="#1d9e68"/><path d="M6.2 13.5H9.3L11.25 16.9L13.2 13.5H16.3L12.8 19.3L16.5 25.5H13.4L11.25 21.7L9.1 25.5H6L9.7 19.3Z" fill="#fff"/></svg>
<svg class="a" style="left:1033px;top:473px" width="22.5" height="30" viewBox="0 0 22.5 30"><path d="M0 1.6C0 .7 .7 0 1.6 0H13.1V7.5c0 .9.7 1.6 1.6 1.6H22.5V28.4c0 .9-.7 1.6-1.6 1.6H1.6c-.9 0-1.6-.7-1.6-1.6Z" fill="#1e6e92"/><path d="M22.5 7.5H15V0Z" fill="#1e6e92"/><text x="3.3" y="22.6" font-family="Liberation Sans" font-weight="700" font-size="10.4" fill="#fff" textLength="15.6" lengthAdjust="spacingAndGlyphs">CSV</text></svg>
<svg class="a" style="left:1087px;top:473px" width="22.5" height="30" viewBox="0 0 22.5 30"><path d="M0 1.6C0 .7 .7 0 1.6 0H13.1V7.5c0 .9.7 1.6 1.6 1.6H22.5V28.4c0 .9-.7 1.6-1.6 1.6H1.6c-.9 0-1.6-.7-1.6-1.6Z" fill="#eb4f4b"/><path d="M22.5 7.5H15V0Z" fill="#eb4f4b"/><path transform="translate(11.25 19) scale(1.18) translate(-11.6 -18.3)" d="M11 12.2c-.9 0-.9 1.6 0 3.6 .8 1.8 2.3 3.7 4.3 4.6 1.5.6 2.8.3 2.6-.6-.2-.9-2.3-1.1-4.9-.6-2.7.5-5.3 1.9-6.2 3.4-.6 1 .1 1.6 1 .9 1.2-1 2.5-3.9 3.4-6.6.6-1.9.7-4.7-.2-4.7z" fill="none" stroke="#fff" stroke-width="1.05"/></svg>
<svg class="a" style="left:1141px;top:473px" width="22.5" height="30" viewBox="0 0 22.5 30"><path d="M0 1.6C0 .7 .7 0 1.6 0H13.1V7.5c0 .9.7 1.6 1.6 1.6H22.5V28.4c0 .9-.7 1.6-1.6 1.6H1.6c-.9 0-1.6-.7-1.6-1.6Z" fill="#1d9e68"/><path d="M22.5 7.5H15V0Z" fill="#1d9e68"/><path d="M6.2 13.5H9.3L11.25 16.9L13.2 13.5H16.3L12.8 19.3L16.5 25.5H13.4L11.25 21.7L9.1 25.5H6L9.7 19.3Z" fill="#fff"/></svg>
<div class="t" style="left:650.0px;width:200px;text-align:center;top:522.05px;font-size:14px;line-height:14px;color:#1f2937;font-weight:400;letter-spacing:0.38px;">Conjunto de datos</div>
<div class="t" style="left:824.0px;width:200px;text-align:center;top:522.05px;font-size:14px;line-height:14px;color:#1f2937;font-weight:400;letter-spacing:0.3px;">Metadatos</div>
<div class="t" style="left:998.0px;width:200px;text-align:center;top:522.05px;font-size:14px;line-height:14px;color:#1f2937;font-weight:400;letter-spacing:0.3px;">Diccionario</div>
<div class="a" style="left:272px;top:563px;width:1055px;height:115px;background:#f3f4f6;"></div>
<div class="t" style="left:476.5px;width:200px;text-align:center;top:614.06px;font-size:16px;line-height:16px;color:#1f2937;font-weight:400;letter-spacing:0.4px;">13/3/2025 - 05h11</div>
<svg class="a" style="left:685px;top:588px" width="22.5" height="30" viewBox="0 0 22.5 30"><path d="M0 1.6C0 .7 .7 0 1.6 0H13.1V7.5c0 .9.7 1.6 1.6 1.6H22.5V28.4c0 .9-.7 1.6-1.6 1.6H1.6c-.9 0-1.6-.7-1.6-1.6Z" fill="#1e6e92"/><path d="M22.5 7.5H15V0Z" fill="#1e6e92"/><text x="3.3" y="22.6" font-family="Liberation Sans" font-weight="700" font-size="10.4" fill="#fff" textLength="15.6" lengthAdjust="spacingAndGlyphs">CSV</text></svg>
<svg class="a" style="left:739px;top:588px" width="22.5" height="30" viewBox="0 0 22.5 30"><path d="M0 1.6C0 .7 .7 0 1.6 0H13.1V7.5c0 .9.7 1.6 1.6 1.6H22.5V28.4c0 .9-.7 1.6-1.6 1.6H1.6c-.9 0-1.6-.7-1.6-1.6Z" fill="#eb4f4b"/><path d="M22.5 7.5H15V0Z" fill="#eb4f4b"/><path transform="translate(11.25 19) scale(1.18) translate(-11.6 -18.3)" d="M11 12.2c-.9 0-.9 1.6 0 3.6 .8 1.8 2.3 3.7 4.3 4.6 1.5.6 2.8.3 2.6-.6-.2-.9-2.3-1.1-4.9-.6-2.7.5-5.3 1.9-6.2 3.4-.6 1 .1 1.6 1 .9 1.2-1 2.5-3.9 3.4-6.6.6-1.9.7-4.7-.2-4.7z" fill="none" stroke="#fff" stroke-width="1.05"/></svg>
<svg class="a" style="left:793px;top:588px" width="22.5" height="30" viewBox="0 0 22.5 30"><path d="M0 1.6C0 .7 .7 0 1.6 0H13.1V7.5c0 .9.7 1.6 1.6 1.6H22.5V28.4c0 .9-.7 1.6-1.6 1.6H1.6c-.9 0-1.6-.7-1.6-1.6Z" fill="#1d9e68"/><path d="M22.5 7.5H15V0Z" fill="#1d9e68"/><path d="M6.2 13.5H9.3L11.25 16.9L13.2 13.5H16.3L12.8 19.3L16.5 25.5H13.4L11.25 21.7L9.1 25.5H6L9.7 19.3Z" fill="#fff"/></svg>
<svg class="a" style="left:859px;top:588px" width="22.5" height="30" viewBox="0 0 22.5 30"><path d="M0 1.6C0 .7 .7 0 1.6 0H13.1V7.5c0 .9.7 1.6 1.6 1.6H22.5V28.4c0 .9-.7 1.6-1.6 1.6H1.6c-.9 0-1.6-.7-1.6-1.6Z" fill="#1e6e92"/><path d="M22.5 7.5H15V0Z" fill="#1e6e92"/><text x="3.3" y="22.6" font-family="Liberation Sans" font-weight="700" font-size="10.4" fill="#fff" textLength="15.6" lengthAdjust="spacingAndGlyphs">CSV</text></svg>
<svg class="a" style="left:913px;top:588px" width="22.5" height="30" viewBox="0 0 22.5 30"><path d="M0 1.6C0 .7 .7 0 1.6 0H13.1V7.5c0 .9.7 1.6 1.6 1.6H22.5V28.4c0 .9-.7 1.6-1.6 1.6H1.6c-.9 0-1.6-.7-1.6-1.6Z" fill="#eb4f4b"/><path d="M22.5 7.5H15V0Z" fill="#eb4f4b"/><path transform="translate(11.25 19) scale(1.18) translate(-11.6 -18.3)" d="M11 12.2c-.9 0-.9 1.6 0 3.6 .8 1.8 2.3 3.7 4.3 4.6 1.5.6 2.8.3 2.6-.6-.2-.9-2.3-1.1-4.9-.6-2.7.5-5.3 1.9-6.2 3.4-.6 1 .1 1.6 1 .9 1.2-1 2.5-3.9 3.4-6.6.6-1.9.7-4.7-.2-4.7z" fill="none" stroke="#fff" stroke-width="1.05"/></svg>
<svg class="a" style="left:967px;top:588px" width="22.5" height="30" viewBox="0 0 22.5 30"><path d="M0 1.6C0 .7 .7 0 1.6 0H13.1V7.5c0 .9.7 1.6 1.6 1.6H22.5V28.4c0 .9-.7 1.6-1.6 1.6H1.6c-.9 0-1.6-.7-1.6-1.6Z" fill="#1d9e68"/><path d="M22.5 7.5H15V0Z" fill="#1d9e68"/><path d="M6.2 13.5H9.3L11.25 16.9L13.2 13.5H16.3L12.8 19.3L16.5 25.5H13.4L11.25 21.7L9.1 25.5H6L9.7 19.3Z" fill="#fff"/></svg>
<svg class="a" style="left:1033px;top:588px" width="22.5" height="30" viewBox="0 0 22.5 30"><path d="M0 1.6C0 .7 .7 0 1.6 0H13.1V7.5c0 .9.7 1.6 1.6 1.6H22.5V28.4c0 .9-.7 1.6-1.6 1.6H1.6c-.9 0-1.6-.7-1.6-1.6Z" fill="#1e6e92"/><path d="M22.5 7.5H15V0Z" fill="#1e6e92"/><text x="3.3" y="22.6" font-family="Liberation Sans" font-weight="700" font-size="10.4" fill="#fff" textLength="15.6" lengthAdjust="spacingAndGlyphs">CSV</text></svg>
<svg class="a" style="left:1087px;top:588px" width="22.5" height="30" viewBox="0 0 22.5 30"><path d="M0 1.6C0 .7 .7 0 1.6 0H13.1V7.5c0 .9.7 1.6 1.6 1.6H22.5V28.4c0 .9-.7 1.6-1.6 1.6H1.6c-.9 0-1.6-.7-1.6-1.6Z" fill="#eb4f4b"/><path d="M22.5 7.5H15V0Z" fill="#eb4f4b"/><path transform="translate(11.25 19) scale(1.18) translate(-11.6 -18.3)" d="M11 12.2c-.9 0-.9 1.6 0 3.6 .8 1.8 2.3 3.7 4.3 4.6 1.5.6 2.8.3 2.6-.6-.2-.9-2.3-1.1-4.9-.6-2.7.5-5.3 1.9-6.2 3.4-.6 1 .1 1.6 1 .9 1.2-1 2.5-3.9 3.4-6.6.6-1.9.7-4.7-.2-4.7z" fill="none" stroke="#fff" stroke-width="1.05"/></svg>
<svg class="a" style="left:1141px;top:588px" width="22.5" height="30" viewBox="0 0 22.5 30"><path d="M0 1.6C0 .7 .7 0 1.6 0H13.1V7.5c0 .9.7 1.6 1.6 1.6H22.5V28.4c0 .9-.7 1.6-1.6 1.6H1.6c-.9 0-1.6-.7-1.6-1.6Z" fill="#1d9e68"/><path d="M22.5 7.5H15V0Z" fill="#1d9e68"/><path d="M6.2 13.5H9.3L11.25 16.9L13.2 13.5H16.3L12.8 19.3L16.5 25.5H13.4L11.25 21.7L9.1 25.5H6L9.7 19.3Z" fill="#fff"/></svg>
<div class="t" style="left:650.0px;width:200px;text-align:center;top:637.05px;font-size:14px;line-height:14px;color:#1f2937;font-weight:400;letter-spacing:0.38px;">Conjunto de datos</div>
<div class="t" style="left:824.0px;width:200px;text-align:center;top:637.05px;font-size:14px;line-height:14px;color:#1f2937;font-weight:400;letter-spacing:0.3px;">Metadatos</div>
<div class="t" style="left:998.0px;width:200px;text-align:center;top:637.05px;font-size:14px;line-height:14px;color:#1f2937;font-weight:400;letter-spacing:0.3px;">Diccionario</div>
<div class="a" style="left:1200px;top:600px;width:119px;height:42px;background:#1e7294;border-radius:7px"></div>
<div class="t" style="left:1243px;top:614.15px;font-size:14px;line-height:14px;color:#fff;font-weight:700;letter-spacing:0px;">Aprobar</div>
<div class="a" style="left:272px;top:678px;width:1055px;height:115px;background:#fff;"></div>
<svg class="a" style="left:685px;top:703px" width="22.5" height="30" viewBox="0 0 22.5 30"><path d="M0 1.6C0 .7 .7 0 1.6 0H13.1V7.5c0 .9.7 1.6 1.6 1.6H22.5V28.4c0 .9-.7 1.6-1.6 1.6H1.6c-.9 0-1.6-.7-1.6-1.6Z" fill="#1e6e92"/><path d="M22.5 7.5H15V0Z" fill="#1e6e92"/><text x="3.3" y="22.6" font-family="Liberation Sans" font-weight="700" font-size="10.4" fill="#fff" textLength="15.6" lengthAdjust="spacingAndGlyphs">CSV</text></svg>
<svg class="a" style="left:739px;top:703px" width="22.5" height="30" viewBox="0 0 22.5 30"><path d="M0 1.6C0 .7 .7 0 1.6 0H13.1V7.5c0 .9.7 1.6 1.6 1.6H22.5V28.4c0 .9-.7 1.6-1.6 1.6H1.6c-.9 0-1.6-.7-1.6-1.6Z" fill="#eb4f4b"/><path d="M22.5 7.5H15V0Z" fill="#eb4f4b"/><path transform="translate(11.25 19) scale(1.18) translate(-11.6 -18.3)" d="M11 12.2c-.9 0-.9 1.6 0 3.6 .8 1.8 2.3 3.7 4.3 4.6 1.5.6 2.8.3 2.6-.6-.2-.9-2.3-1.1-4.9-.6-2.7.5-5.3 1.9-6.2 3.4-.6 1 .1 1.6 1 .9 1.2-1 2.5-3.9 3.4-6.6.6-1.9.7-4.7-.2-4.7z" fill="none" stroke="#fff" stroke-width="1.05"/></svg>
<svg class="a" style="left:793px;top:703px" width="22.5" height="30" viewBox="0 0 22.5 30"><path d="M0 1.6C0 .7 .7 0 1.6 0H13.1V7.5c0 .9.7 1.6 1.6 1.6H22.5V28.4c0 .9-.7 1.6-1.6 1.6H1.6c-.9 0-1.6-.7-1.6-1.6Z" fill="#1d9e68"/><path d="M22.5 7.5H15V0Z" fill="#1d9e68"/><path d="M6.2 13.5H9.3L11.25 16.9L13.2 13.5H16.3L12.8 19.3L16.5 25.5H13.4L11.25 21.7L9.1 25.5H6L9.7 19.3Z" fill="#fff"/></svg>
<svg class="a" style="left:859px;top:703px" width="22.5" height="30" viewBox="0 0 22.5 30"><path d="M0 1.6C0 .7 .7 0 1.6 0H13.1V7.5c0 .9.7 1.6 1.6 1.6H22.5V28.4c0 .9-.7 1.6-1.6 1.6H1.6c-.9 0-1.6-.7-1.6-1.6Z" fill="#1e6e92"/><path d="M22.5 7.5H15V0Z" fill="#1e6e92"/><text x="3.3" y="22.6" font-family="Liberation Sans" font-weight="700" font-size="10.4" fill="#fff" textLength="15.6" lengthAdjust="spacingAndGlyphs">CSV</text></svg>
<svg class="a" style="left:913px;top:703px" width="22.5" height="30" viewBox="0 0 22.5 30"><path d="M0 1.6C0 .7 .7 0 1.6 0H13.1V7.5c0 .9.7 1.6 1.6 1.6H22.5V28.4c0 .9-.7 1.6-1.6 1.6H1.6c-.9 0-1.6-.7-1.6-1.6Z" fill="#eb4f4b"/><path d="M22.5 7.5H15V0Z" fill="#eb4f4b"/><path transform="translate(11.25 19) scale(1.18) translate(-11.6 -18.3)" d="M11 12.2c-.9 0-.9 1.6 0 3.6 .8 1.8 2.3 3.7 4.3 4.6 1.5.6 2.8.3 2.6-.6-.2-.9-2.3-1.1-4.9-.6-2.7.5-5.3 1.9-6.2 3.4-.6 1 .1 1.6 1 .9 1.2-1 2.5-3.9 3.4-6.6.6-1.9.7-4.7-.2-4.7z" fill="none" stroke="#fff" stroke-width="1.05"/></svg>
<svg class="a" style="left:967px;top:703px" width="22.5" height="30" viewBox="0 0 22.5 30"><path d="M0 1.6C0 .7 .7 0 1.6 0H13.1V7.5c0 .9.7 1.6 1.6 1.6H22.5V28.4c0 .9-.7 1.6-1.6 1.6H1.6c-.9 0-1.6-.7-1.6-1.6Z" fill="#1d9e68"/><path d="M22.5 7.5H15V0Z" fill="#1d9e68"/><path d="M6.2 13.5H9.3L11.25 16.9L13.2 13.5H16.3L12.8 19.3L16.5 25.5H13.4L11.25 21.7L9.1 25.5H6L9.7 19.3Z" fill="#fff"/></svg>
<svg class="a" style="left:1033px;top:703px" width="22.5" height="30" viewBox="0 0 22.5 30"><path d="M0 1.6C0 .7 .7 0 1.6 0H13.1V7.5c0 .9.7 1.6 1.6 1.6H22.5V28.4c0 .9-.7 1.6-1.6 1.6H1.6c-.9 0-1.6-.7-1.6-1.6Z" fill="#1e6e92"/><path d="M22.5 7.5H15V0Z" fill="#1e6e92"/><text x="3.3" y="22.6" font-family="Liberation Sans" font-weight="700" font-size="10.4" fill="#fff" textLength="15.6" lengthAdjust="spacingAndGlyphs">CSV</text></svg>
<svg class="a" style="left:1087px;top:703px" width="22.5" height="30" viewBox="0 0 22.5 30"><path d="M0 1.6C0 .7 .7 0 1.6 0H13.1V7.5c0 .9.7 1.6 1.6 1.6H22.5V28.4c0 .9-.7 1.6-1.6 1.6H1.6c-.9 0-1.6-.7-1.6-1.6Z" fill="#eb4f4b"/><path d="M22.5 7.5H15V0Z" fill="#eb4f4b"/><path transform="translate(11.25 19) scale(1.18) translate(-11.6 -18.3)" d="M11 12.2c-.9 0-.9 1.6 0 3.6 .8 1.8 2.3 3.7 4.3 4.6 1.5.6 2.8.3 2.6-.6-.2-.9-2.3-1.1-4.9-.6-2.7.5-5.3 1.9-6.2 3.4-.6 1 .1 1.6 1 .9 1.2-1 2.5-3.9 3.4-6.6.6-1.9.7-4.7-.2-4.7z" fill="none" stroke="#fff" stroke-width="1.05"/></svg>
<svg class="a" style="left:1141px;top:703px" width="22.5" height="30" viewBox="0 0 22.5 30"><path d="M0 1.6C0 .7 .7 0 1.6 0H13.1V7.5c0 .9.7 1.6 1.6 1.6H22.5V28.4c0 .9-.7 1.6-1.6 1.6H1.6c-.9 0-1.6-.7-1.6-1.6Z" fill="#1d9e68"/><path d="M22.5 7.5H15V0Z" fill="#1d9e68"/><path d="M6.2 13.5H9.3L11.25 16.9L13.2 13.5H16.3L12.8 19.3L16.5 25.5H13.4L11.25 21.7L9.1 25.5H6L9.7 19.3Z" fill="#fff"/></svg>
<div class="t" style="left:650.0px;width:200px;text-align:center;top:752.05px;font-size:14px;line-height:14px;color:#1f2937;font-weight:400;letter-spacing:0.38px;">Conjunto de datos</div>
<div class="t" style="left:824.0px;width:200px;text-align:center;top:752.05px;font-size:14px;line-height:14px;color:#1f2937;font-weight:400;letter-spacing:0.3px;">Metadatos</div>
<div class="t" style="left:998.0px;width:200px;text-align:center;top:752.05px;font-size:14px;line-height:14px;color:#1f2937;font-weight:400;letter-spacing:0.3px;">Diccionario</div>
<div class="a" style="left:272px;top:218px;width:1055px;height:1px;background:#e5e7eb;"></div>
<div class="a" style="left:272px;top:333px;width:1055px;height:1px;background:#e5e7eb;"></div>
<div class="a" style="left:272px;top:448px;width:1055px;height:1px;background:#e5e7eb;"></div>
<div class="a" style="left:272px;top:563px;width:1055px;height:1px;background:#e5e7eb;"></div>
<div class="a" style="left:272px;top:678px;width:1055px;height:1px;background:#e5e7eb;"></div>
<div class="a" style="left:497px;top:155px;width:1px;height:573px;background:#e5e7eb;"></div>
<div class="a" style="left:656px;top:155px;width:1px;height:573px;background:#e5e7eb;"></div>
<div class="a" style="left:1191px;top:155px;width:1px;height:573px;background:#e5e7eb;"></div>
<div class="a" style="left:0px;top:86px;width:1351px;height:69px;background:#e5e7eb;"></div>
<div class="a" style="left:0px;top:155px;width:1351px;height:1px;background:#d4d7dc;"></div>
<svg class="a" style="left:0px;top:0px" width="160" height="145" viewBox="0 0 160 145"><path d="M24.5 118 C22.5 114 33 104.8 44 104.8 C50.5 104.8 51.5 109 47.5 112.5 C43.5 116 36 119.2 30.5 119.5 M40.5 109.5 C37.5 112.5 34 116.5 31.5 120.5 M36 110.8 L41.8 111.2 M49 115 C46.8 115 46.5 120 48.6 120 C50.8 120 51 115.2 49 115 M51 119.5 L52.3 115 C53.5 114.5 55.5 114.6 57 115.2 M64.8 108.3 C62.5 112.5 58 115.5 58.5 118.8 C59 121 62.5 120 62.8 116.5 C63 114.5 61 113.5 57 114 M71 114 C67.5 113 65.5 119.5 67.8 120 C69.5 120.3 71 116.5 71.6 114 L70.6 120 M77 104.2 C75.3 109 73.5 114.5 72 119.7 M83.2 120 L84.3 114.3 C86 113 88.5 113.5 88.3 115.5 L87.5 120 M94.5 113.8 C90.5 112.8 88.5 120 91 120 C93 120 94.3 116 94.8 113.6 L94 120 M99.5 113.5 C96 112 94.5 120.5 98.5 119.8 M102.3 114 L101.6 119.8 M102.9 111.2 L103 111.6 M106.2 112.8 C103.8 112.8 103.5 120 105.9 120 C108.3 120 108.6 112.8 106.2 112.8 M109.2 120 L110.3 114.2 C112 113 114.8 113.4 114.5 115.5 L113.8 120 M121 113.8 C117 112.8 115.5 120 117.8 120 C119.8 120 121 116 121.5 113.6 L120.8 120 M129.2 103.5 C127 109 125 114.5 123.5 119.8 M140.5 113.5 C136.5 112.5 134.5 120 137 120 C139 120 140.8 116 141 113 M144.8 105 C142.5 110 140.5 115 139.6 120 M142.2 117 C145 117 148.5 115.5 147.8 113.5 C147 111.8 143 113 142.5 116.5 C142.2 119.5 145.5 120.2 149 119" fill="none" stroke="#2b95c4" stroke-width="1.3" stroke-linecap="round" stroke-linejoin="round"/><text x="26" y="131" font-family="Liberation Sans" font-weight="700" font-size="11.5" fill="#1c1c22" textLength="124" lengthAdjust="spacingAndGlyphs">TRANSPARENCIA</text><text x="82" y="138" font-family="Liberation Sans" font-size="5" fill="#333" textLength="68" lengthAdjust="spacingAndGlyphs">Repositorio único nacional</text></svg>
<div class="t" style="left:750px;top:104.84px;font-size:12px;line-height:12px;color:#4b5563;font-weight:400;letter-spacing:-0.2px;">CECILIA MERCEDES CARRASCO MENDOZA</div>
<div class="t" style="left:750px;top:128.84px;font-size:12px;line-height:12px;color:#4b5563;font-weight:400;letter-spacing:0.15px;">Supervisora PNT</div>
<div class="a" style="left:996px;top:97px;width:1px;height:48px;background:#4b5563;"></div>
<div class="t" style="left:1017px;top:114.16px;font-size:16px;line-height:16px;color:#111827;font-weight:700;letter-spacing:0px;">Ver Perfil</div>
<div class="t" style="left:1138px;top:114.16px;font-size:16px;line-height:16px;color:#111827;font-weight:700;letter-spacing:0px;">Ayuda</div>
<div class="t" style="left:1255px;top:114.16px;font-size:16px;line-height:16px;color:#111827;font-weight:700;letter-spacing:0px;">Salir</div>
<div class="a" style="left:0px;top:156px;width:255px;height:572px;background:#e5e7eb;"></div>
<div class="a" style="left:255px;top:156px;width:1px;height:572px;background:#d1d5db;"></div>
<div class="a" style="left:12px;top:165px;width:231px;height:41px;background:#d1d5db;border-radius:7px"></div>
<div class="t" style="left:57px;top:178.26px;font-size:16px;line-height:16px;color:#1a202c;font-weight:400;letter-spacing:0.52px;">Reportes T. Activa</div>
<div class="t" style="left:57px;top:227.26px;font-size:16px;line-height:16px;color:#1a202c;font-weight:400;letter-spacing:0.45px;">T. Pasiva</div>
<div class="t" style="left:57px;top:276.26px;font-size:16px;line-height:16px;color:#1a202c;font-weight:400;letter-spacing:0.45px;">Usuarios</div>
<div class="t" style="left:57px;top:325.26px;font-size:16px;line-height:16px;color:#1a202c;font-weight:400;letter-spacing:0.45px;">Institución</div>
<div class="t" style="left:57px;top:374.26px;font-size:16px;line-height:16px;color:#1a202c;font-weight:400;letter-spacing:0.45px;">T.Activa</div>
<div class="t" style="left:57px;top:423.26px;font-size:16px;line-height:16px;color:#1a202c;font-weight:400;letter-spacing:0.45px;">T.Focalizada</div>
<div class="t" style="left:57px;top:472.26px;font-size:16px;line-height:16px;color:#1a202c;font-weight:400;letter-spacing:0.45px;">T.Colaborativa</div>
<svg class="a" style="left:21px;top:174px;" width="23" height="22" viewBox="0 0 23 22"><path d="M11.5 0.5 L22.5 11 H19.5 V21.5 H3.5 V11 H0.5 Z" fill="#667085"/></svg>
<svg class="a" style="left:21px;top:224px;" width="24" height="22" viewBox="0 0 24 22"><path d="M2 2 H21 V12 M14 19.5 H2 V2 L11.5 10 L21 2" fill="none" stroke="#667085" stroke-width="2.2"/><path d="M15 16.5 L17.5 19 L22.5 14" fill="none" stroke="#667085" stroke-width="1.8"/></svg>
<svg class="a" style="left:22px;top:270px;" width="22" height="26" viewBox="0 0 22 26"><circle cx="10.5" cy="7.5" r="5" fill="none" stroke="#667085" stroke-width="2"/><path d="M3 24.5 V23 A7.5 5.5 0 0 1 18 23 V24.5" fill="none" stroke="#667085" stroke-width="2"/></svg>
<svg class="a" style="left:21px;top:322px;" width="23" height="21" viewBox="0 0 23 21"><path d="M3.5 20 V1 H20.5 V20" fill="none" stroke="#667085" stroke-width="2"/><path d="M0 20 H23" stroke="#667085" stroke-width="2"/><path d="M7.5 6.5 H10.5 M12.5 6.5 H15.5 M7.5 10.5 H10.5 M12.5 10.5 H15.5 M7.5 14.5 H10.5 M12.5 14.5 H15.5" stroke="#667085" stroke-width="2"/></svg>
<svg class="a" style="left:23px;top:372px;" width="19" height="19" viewBox="0 0 19 19"><rect x="1" y="1" width="17" height="17" rx="2.5" fill="none" stroke="#667085" stroke-width="2"/><path d="M5.5 10.5 V14.5 M9.5 8 V14.5 M13.5 5 V14.5" stroke="#667085" stroke-width="2.2"/></svg>
<svg class="a" style="left:22px;top:420px;" width="21" height="21" viewBox="0 0 21 21"><path d="M7 6 V1 H20 V14 H15" fill="none" stroke="#667085" stroke-width="2"/><rect x="1" y="7" width="13" height="13" fill="none" stroke="#667085" stroke-width="2"/><path d="M4.5 13 L7 15.5 L11 11" fill="none" stroke="#667085" stroke-width="1.8"/></svg>
<svg class="a" style="left:23px;top:472px;" width="19" height="16" viewBox="0 0 19 16"><path d="M1.5 8 L7 13.5 L17.5 2.5" fill="none" stroke="#667085" stroke-width="2"/></svg>
<div class="a" style="left:12px;top:546px;width:231px;height:107px;background:#dae0e7;border-radius:6px"></div>
<svg class="a" style="left:22px;top:557px;" width="20" height="18" viewBox="0 0 20 18"><path d="M0 0 H10.5 V18 H0 Z M10.5 4.5 H20 V18 H10.5 Z" fill="#1f6b8d"/><path d="M2.3 3.3 H8.2 M2.3 7.3 H8.2 M2.3 11.3 H8.2 M2.3 15.3 H8.2 M12.8 9 H17.7 M12.8 13 H17.7" stroke="#dae0e7" stroke-width="1.7"/></svg>
<div class="t" style="left:20px;top:589.15px;font-size:14px;line-height:14px;color:#1f6886;font-weight:400;letter-spacing:0.64px;-webkit-text-stroke:0.25px #1f6886">Gobierno Autónomo</div>
<div class="t" style="left:20px;top:609.15px;font-size:14px;line-height:14px;color:#1f6886;font-weight:400;letter-spacing:0.55px;-webkit-text-stroke:0.25px #1f6886">Descentralizado</div>
<div class="t" style="left:20px;top:629.15px;font-size:14px;line-height:14px;color:#1f6886;font-weight:400;letter-spacing:0.32px;-webkit-text-stroke:0.25px #1f6886">Parroquial De San Juan</div>
<div class="a" style="left:1351px;top:86px;width:15px;height:642px;background:#fbfbfb;"></div>
<svg class="a" style="left:1353px;top:90px;" width="11" height="8" viewBox="0 0 11 8"><path d="M5.5 2.5 L10.3 7.5 H0.7 Z" fill="#8a8a8a"/></svg>
<svg class="a" style="left:1353px;top:714px;" width="11" height="8" viewBox="0 0 11 8"><path d="M5.5 6 L10.3 1 H0.7 Z" fill="#8a8a8a"/></svg>
<div class="a" style="left:1354px;top:222px;width:9px;height:118px;background:#8a8a8a;border-radius:5px"></div>
<div class="a" style="left:0px;top:728px;width:1366px;height:40px;background:#3d3128;"></div>
<svg class="a" style="left:16px;top:740px;" width="17" height="17" viewBox="0 0 17 17"><path d="M0 2.3 L7.3 1.2 V7.6 H0 Z M8.6 1 L16.3 0 V7.6 H8.6 Z M0 8.9 H7.3 V15.3 L0 14.3 Z M8.6 8.9 H16.3 V16.6 L8.6 15.5 Z" fill="#fff"/></svg>
<svg class="a" style="left:60px;top:736px;" width="24" height="24" viewBox="0 0 24 24"><circle cx="13.8" cy="10" r="7.7" fill="none" stroke="#fff" stroke-width="2.3"/><path d="M8.3 15.8 L2.3 21.8" stroke="#fff" stroke-width="2.4" stroke-linecap="round"/></svg>
<svg class="a" style="left:111px;top:737px;" width="24" height="22" viewBox="0 0 24 22"><defs><linearGradient id="cpl" x1="0" y1="0" x2="0" y2="1"><stop offset="0" stop-color="#2f8ff0"/><stop offset=".5" stop-color="#52c98a"/><stop offset="1" stop-color="#f3d23a"/></linearGradient><linearGradient id="cpr" x1="0" y1="0" x2="0" y2="1"><stop offset="0" stop-color="#b45ef0"/><stop offset=".55" stop-color="#f0609a"/><stop offset="1" stop-color="#f8803a"/></linearGradient></defs><path d="M6 0.5 H12.5 C14.8 0.5 15.3 2.5 14.8 4 L10.8 15.5 C10.2 17 9 17.5 7.5 17.5 H3 C1 17.5 0.2 16 0.7 14 L3.6 3.2 C4.1 1.4 4.8 0.5 6 0.5Z" fill="url(#cpl)"/><path d="M18 21.5 H11.5 C9.2 21.5 8.7 19.5 9.2 18 L13.2 6.5 C13.8 5 15 4.5 16.5 4.5 H21 C23 4.5 23.8 6 23.3 8 L20.4 18.8 C19.9 20.6 19.2 21.5 18 21.5Z" fill="url(#cpr)"/><path d="M13.5 4.5 L9.5 17" stroke="#3d3128" stroke-width="1.2"/></svg>
<svg class="a" style="left:159px;top:735px;" width="25" height="25" viewBox="0 0 25 25"><path d="M12.5 5 C7.5 5 4 8.8 4 13.5 C4 18.2 7.8 21.5 12.5 21.5 C16 21.5 18.8 19.6 20 17 H15.5 C14.8 18 13.8 18.5 12.5 18.5 C10.3 18.5 8.7 17 8.6 15 H20.8 C20.9 14.5 21 14 21 13.5 C21 8.8 17.5 5 12.5 5Z M8.7 11.8 C9 10 10.5 8.3 12.5 8.3 C14.5 8.3 16 10 16.3 11.8Z" fill="#3cb5ec"/><path d="M3 22 C0 19 5 9 12 5 C18 1.5 23 1 24 3 C25 5 22 9 20 11 C22 7 23 4 21.5 3.5 C19 2.5 10 7 6 14 C4 17.5 3.5 21 5 22 C6.5 23 9 22 11 21 C8 23.5 4.5 23.5 3 22Z" fill="#f2c53d"/></svg>
<svg class="a" style="left:208px;top:735px;" width="26" height="26" viewBox="0 0 26 26"><defs><linearGradient id="eg1" x1="0.2" y1="0.9" x2="0.9" y2="0.3"><stop offset="0" stop-color="#0b5fb8"/><stop offset=".55" stop-color="#2aa6e2"/><stop offset="1" stop-color="#5ad86a"/></linearGradient></defs><circle cx="12.7" cy="12.7" r="12.3" fill="url(#eg1)"/><path d="M1 14 C2 9 6.5 6.5 11 7 C16 7.5 19.5 11 19.5 14.5 L24.8 14.5 C24 20.5 19 25 12.7 25 C6 25 1.2 20 1 14Z" fill="#1a78d0"/><path d="M9.5 14.5 C9.5 12.2 11.5 10.8 14 11 C16.5 11.2 18.3 12.8 18.8 14.5 Z" fill="#3d3128"/><path d="M6 14.5 C6 20 11 24.5 17 24 C12 25.5 4.5 23 3.5 17 Z" fill="#0c4f9c" opacity=".7"/></svg>
<div class="a" style="left:246px;top:728px;width:48px;height:40px;background:#6a5d53;"></div>
<div class="a" style="left:246px;top:766px;width:48px;height:2px;background:#89c4ee;"></div>
<svg class="a" style="left:258px;top:735px;" width="25" height="25" viewBox="0 0 25 25"><circle cx="12.5" cy="12.5" r="12" fill="#db4437"/><path d="M12.5 12.5 L1.7 7.3 A12 12 0 0 0 12.5 24.5 Z" fill="#0f9d58"/><path d="M12.5 12.5 L12.5 24.5 A12 12 0 0 0 23.3 7.3 Z" fill="#ffcd40"/><circle cx="12.5" cy="12.5" r="5.5" fill="#fff"/><circle cx="12.5" cy="12.5" r="4.3" fill="#4285f4"/></svg>
<div class="a" style="left:270px;top:746px;width:15px;height:15px;background:#8d6e63;border-radius:8px;border:1px solid #bbb"></div>
<div class="t" style="left:270.0px;width:15px;text-align:center;top:749.38px;font-size:9px;line-height:9px;color:#fff;font-weight:400;letter-spacing:0px;">G</div>
<svg class="a" style="left:307px;top:738px;" width="23" height="19" viewBox="0 0 23 19"><path d="M0 1.5 C0 .7 .7 0 1.5 0 H7.5 L9.5 2 H21.5 C22.3 2 23 2.7 23 3.5 V6 H0Z" fill="#e0a83a"/><path d="M0 4.5 H23 V17.5 C23 18.3 22.3 19 21.5 19 H1.5 C.7 19 0 18.3 0 17.5Z" fill="#f9d26b"/><path d="M4 11 H19 V19 H15 V15 H8 V19 H4Z" fill="#3d9be9"/></svg>
<div class="a" style="left:299px;top:766px;width:40px;height:2px;background:#89c4ee;"></div>
<div class="a" style="left:331px;top:766px;width:8px;height:2px;background:#5b7f9c;"></div>
<svg class="a" style="left:355px;top:736px;" width="26" height="24" viewBox="0 0 26 24"><path d="M5 7 L14.5 1 L25 7 V21.5 C25 22.3 24.3 23 23.5 23 H6.5 C5.7 23 5 22.3 5 21.5Z" fill="#1a86d8"/><path d="M14.5 1 L25 7 L14.5 13Z" fill="#0f5fb0" opacity=".6"/><path d="M5 13 L25 9 V21.5 C25 22.3 24.3 23 23.5 23 H6.5 C5.7 23 5 22.3 5 21.5Z" fill="#48c0f0"/><rect x="0.5" y="4" width="15" height="15" rx="1.2" fill="#0f6cbd"/><text x="8" y="15.8" text-anchor="middle" font-family="Liberation Sans" font-weight="700" font-size="11" fill="#fff">O</text></svg>
<div class="a" style="left:347px;top:766px;width:41px;height:2px;background:#89c4ee;"></div>
<svg class="a" style="left:404px;top:735px;" width="25" height="25" viewBox="0 0 25 25"><defs><linearGradient id="ffg" x1="0.9" y1="0" x2="0.2" y2="1"><stop offset="0" stop-color="#ffe34a"/><stop offset=".45" stop-color="#ff8a2a"/><stop offset="1" stop-color="#f0206e"/></linearGradient></defs><path d="M17 1 C18 3 21.5 5.5 23.5 9.5 C25.5 14 24 20 19.5 23 C15 26 7.5 25.5 3.5 21 C0 17 0.5 10.5 3 7 C3.5 9 4.5 10 5 10.5 C5.5 7 8 4.5 11 4 C14 3.5 17.5 4.5 18.5 6 C18 4 17.5 2.5 17 1Z" fill="url(#ffg)"/><circle cx="13.5" cy="13.5" r="5.2" fill="#7b3fe4"/><path d="M5.5 11.5 C7 9 10 8 12.5 8.5 C10 9.5 8.5 11.5 8.7 14 C6.8 13.5 6 12.5 5.5 11.5Z" fill="#ff9a3a"/></svg>
<div class="a" style="left:455.5px;top:737.5px;width:21px;height:20.5px;background:#c10f00;border-radius:4px"></div>
<svg class="a" style="left:455px;top:737px;" width="22" height="21" viewBox="0 0 22 21"><path transform="translate(11 10.5) scale(0.92) translate(-11.3 -11.3)" d="M10.5 5c-.8 0-.8 1.8 0 4 .8 2 2.4 4.2 4.6 5.2 1.6.6 2.9.3 2.7-.6-.2-1-2.5-1.2-5.3-.7-2.9.6-5.6 2.1-6.6 3.7-.6 1.1.1 1.7 1.1 1 1.3-1.1 2.7-4.2 3.6-7.2.7-2.1.7-5.4-.1-5.4z" fill="none" stroke="#fff" stroke-width="1.4"/></svg>
<svg class="a" style="left:502px;top:736px;" width="26" height="24" viewBox="0 0 26 24"><path d="M8 1 H24 C25 1 26 2 26 3 V21 C26 22 25 23 24 23 H10 C9 23 8 22 8 21Z" fill="#2b7cd3"/><path d="M8 1 H24 C25 1 26 2 26 3 V8 H8Z" fill="#41a5ee"/><path d="M8 15 H26 V21 C26 22 25 23 24 23 H10 C9 23 8 22 8 21Z" fill="#185abd"/><rect x="0" y="5" width="15" height="14" rx="1.5" fill="#185abd"/><text x="7.5" y="16.3" text-anchor="middle" font-family="Liberation Sans" font-weight="700" font-size="10.5" fill="#fff">W</text></svg>
<div class="a" style="left:495px;top:766px;width:40px;height:2px;background:#89c4ee;"></div>
<div class="a" style="left:552px;top:736px;width:24px;height:24px;background:#e4e4e6;border-radius:3px"></div>
<svg class="a" style="left:552px;top:736px;" width="24" height="24" viewBox="0 0 24 24"><path d="M12.5 1.5 C14.5 3.5 16 7 16.5 11 L8.5 11 C9 7 10.5 3.5 12.5 1.5Z" fill="#1e1e1e"/><path d="M4.5 12 C6 10.5 8 10.5 9 11.5 M20 11 C19 12 18.5 13 18.5 14" stroke="#555" stroke-width="1.6" fill="none"/><path d="M7 13 C8 11 16 11 17.5 13 C19 16 20 19 19 21 C16 22.5 9 22.5 6 21 C5 19 5.5 16 7 13Z" fill="#f4f4f4"/><path d="M6 21 C9 22.5 16 22.5 19 21 C18 19 16 18 12.5 18 C9 18 7 19 6 21Z" fill="#c8c8c8"/><circle cx="12.4" cy="10.6" r="2.6" fill="#d82424"/></svg>
<div class="a" style="left:544px;top:766px;width:40px;height:2px;background:#89c4ee;"></div>
<svg class="a" style="left:1122px;top:742px;" width="14" height="10" viewBox="0 0 14 10"><path d="M1 8.5 L7 2.5 L13 8.5" fill="none" stroke="#fff" stroke-width="1.4"/></svg>
<svg class="a" style="left:1144px;top:740px;" width="18" height="16" viewBox="0 0 18 16"><path d="M1.5 5.5 H4 L7.5 2 V14 L4 10.5 H1.5 Z" fill="none" stroke="#fff" stroke-width="1.2"/><path d="M9.5 6 C10.5 7 10.5 9 9.5 10 M11.5 4 C13.3 6 13.3 10 11.5 12" fill="none" stroke="#fff" stroke-width="1.2"/><path d="M13.8 1.5 C16.8 4.5 16.8 11.5 13.8 14.5" fill="none" stroke="#aaa" stroke-width="1"/></svg>
<svg class="a" style="left:1171px;top:742px;" width="14" height="14" viewBox="0 0 14 14"><path d="M1.2 12.5 A11.3 11.3 0 0 1 12.5 1.2" fill="none" stroke="#999" stroke-width="1"/><path d="M4 12.5 A8.5 8.5 0 0 1 12.5 4 M7 12.5 A5.5 5.5 0 0 1 12.5 7" fill="none" stroke="#fff" stroke-width="1.2"/><circle cx="12" cy="12" r="1.5" fill="#fff"/></svg>
<svg class="a" style="left:1195px;top:739px;" width="13" height="18" viewBox="0 0 13 18"><rect x="1.5" y="5.5" width="7" height="7" rx="1.2" fill="none" stroke="#fff" stroke-width="1.2"/><path d="M8.5 8 L11.5 6.3 V11.7 L8.5 10" fill="none" stroke="#fff" stroke-width="1.1"/><path d="M2.5 2.5 C4.5 1.2 7.5 1.2 9.5 2.5 M2.5 15.5 C4.5 16.8 7.5 16.8 9.5 15.5" fill="none" stroke="#fff" stroke-width="1.1"/></svg>
<div class="t" style="left:1221px;top:742.87px;font-size:11.5px;line-height:11.5px;color:#fff;font-weight:400;letter-spacing:0px;transform:scaleX(0.82);transform-origin:0 0">ESP</div>
<div class="t" style="left:1250.5px;width:60px;text-align:center;top:732.84px;font-size:12px;line-height:12px;color:#fff;font-weight:400;letter-spacing:-0.3px;">10:11</div>
<div class="t" style="left:1241.3px;width:80px;text-align:center;top:750.84px;font-size:12px;line-height:12px;color:#fff;font-weight:400;letter-spacing:-0.3px;">13/3/2025</div>
<svg class="a" style="left:1324px;top:738px;" width="26" height="26" viewBox="0 0 26 26"><path d="M1 2 H17 V15 H9 L5.5 18.5 V15 H1 Z" fill="#fff"/><path d="M4 6 H14 M4 8.8 H14 M4 11.6 H11" stroke="#3d3128" stroke-width="1.2"/><circle cx="16.5" cy="17.2" r="7.6" fill="#353029" stroke="#9a938d" stroke-width="1"/><text x="16.7" y="21.6" text-anchor="middle" font-family="Liberation Sans" font-weight="700" font-size="12" fill="#fff">1</text></svg>
<div class="a" style="left:1361px;top:728px;width:1px;height:40px;background:#777;"></div>
</body></html>
